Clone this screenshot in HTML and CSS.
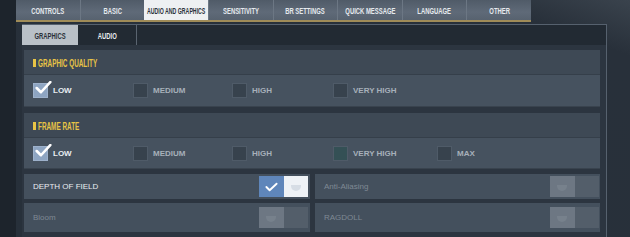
FILE: index.html
```html
<!DOCTYPE html>
<html>
<head>
<meta charset="utf-8">
<link rel="stylesheet" href="styles.css">
</head>
<body>
<div class="page">
  <div class="side"></div>
  <div class="main">
    <div class="tabs">
      <div class="tab"><span class="sx">CONTROLS</span></div>
      <div class="tab"><span class="sx">BASIC</span></div>
      <div class="tab active"><span class="sx">AUDIO AND GRAPHICS</span></div>
      <div class="tab"><span class="sx">SENSITIVITY</span></div>
      <div class="tab"><span class="sx">BR SETTINGS</span></div>
      <div class="tab"><span class="sx">QUICK MESSAGE</span></div>
      <div class="tab"><span class="sx">LANGUAGE</span></div>
      <div class="tab"><span class="sx">OTHER</span></div>
    </div>
    <div class="goldline"></div>
    <div class="frame">
      <div class="subtabs">
        <div class="subtab active"><span class="sx">GRAPHICS</span></div>
        <div class="subtab"><span class="sx">AUDIO</span></div>
      </div>
      <div class="content">
        <div class="section">
          <div class="sec-head"><span class="bar"></span><span class="hx">GRAPHIC QUALITY</span></div>
          <div class="options">
            <div class="opt on"><span class="cb"><svg viewBox="0 0 20 16" class="tick"><path d="M2 8 L7 13 L18 1"/></svg></span>LOW</div>
            <div class="opt"><span class="cb"></span>MEDIUM</div>
            <div class="opt"><span class="cb"></span>HIGH</div>
            <div class="opt"><span class="cb"></span>VERY HIGH</div>
          </div>
        </div>
        <div class="section">
          <div class="sec-head"><span class="bar"></span><span class="hx">FRAME RATE</span></div>
          <div class="options">
            <div class="opt on"><span class="cb"><svg viewBox="0 0 20 16" class="tick"><path d="M2 8 L7 13 L18 1"/></svg></span>LOW</div>
            <div class="opt"><span class="cb"></span>MEDIUM</div>
            <div class="opt"><span class="cb"></span>HIGH</div>
            <div class="opt vh"><span class="cb"></span>VERY HIGH</div>
            <div class="opt"><span class="cb"></span>MAX</div>
          </div>
        </div>
        <div class="toggles">
          <div class="trow r1">
            <span class="tlabel bright">DEPTH OF FIELD</span>
            <span class="toggle on"><span class="half left"><svg viewBox="0 0 14 10" class="tmark"><path d="M1.5 5 L5 8.5 L12.5 1.5"/></svg></span><span class="half right"><span class="dot"></span></span></span>
          </div>
          <div class="trow r1">
            <span class="tlabel">Anti-Aliasing</span>
            <span class="toggle off"><span class="half left"><span class="dot dim"></span></span><span class="half right"></span></span>
          </div>
          <div class="trow r2">
            <span class="tlabel">Bloom</span>
            <span class="toggle off"><span class="half left"><span class="dot dim"></span></span><span class="half right"></span></span>
          </div>
          <div class="trow r2">
            <span class="tlabel">RAGDOLL</span>
            <span class="toggle off"><span class="half left"><span class="dot dim"></span></span><span class="half right"></span></span>
          </div>
        </div>
      </div>
    </div>
  </div>
</div>
</body>
</html>
```

FILE: styles.css
```css
html, body {
  margin: 0;
  padding: 0;
}
body {
  width: 630px;
  height: 237px;
  overflow: hidden;
  background: #28303a;
  font-family: "Liberation Sans", Arial, sans-serif;
}
.page {
  display: flex;
  height: 237px;
  background: linear-gradient(200deg, #3a434d 0%, #28303a 12%, #27303a 100%);
}
.side {
  width: 16px;
  flex: none;
  background: #1d242c;
}
.main {
  flex: 1;
  display: flex;
  flex-direction: column;
}
.tabs {
  display: flex;
  width: 515px;
  height: 20px;
}
.tab {
  flex: 1;
  min-width: 0;
  display: flex;
  align-items: center;
  justify-content: center;
  background: linear-gradient(#505b68, #5f6a78 60%, #57626f);
  border-left: 1px solid #6c7784;
  color: #e6eaee;
  font-weight: bold;
  font-size: 9.5px;
  white-space: nowrap;
  overflow: visible;
}
.sx {
  display: inline-block;
  transform: scaleX(0.62);
  transform-origin: center;
}
.tab:first-child { border-left: none; }
.tab.active {
  background: #eef0f2;
  color: #2c333b;
  border-left: none;
}
.tab.active .sx { transform: scaleX(0.55); }
.goldline {
  width: 515px;
  height: 2px;
  background: #a08c58;
}
.frame {
  margin-top: 2px;
  margin-left: 6px;
  width: 584px;
  flex: 1;
  border-top: 1px solid #56616e;
  border-right: 1px solid #56616e;
  background: #2c3540;
  display: flex;
  flex-direction: column;
}
.subtabs {
  display: flex;
  height: 20px;
  background: #222a33;
}
.subtab {
  display: flex;
  align-items: center;
  justify-content: center;
  color: #e8ecef;
  font-weight: bold;
  font-size: 9.5px;
  width: 58px;
  border-right: 1px solid #5a6470;
}
.subtab.active {
  width: 56px;
  background: #b9c0c7;
  color: #2a3038;
  border-right: none;
}
.content {
  padding: 5px 6px 0 2px;
  display: flex;
  flex-direction: column;
  gap: 6px;
}
.section {
  background: #424d5a;
  display: flex;
  flex-direction: column;
}
.sec-head {
  height: 25px;
  display: flex;
  align-items: center;
  padding-left: 9px;
  padding-top: 2px;
  box-sizing: border-box;
  border-bottom: 1px solid #353f4a;
  color: #e8c446;
  font-weight: bold;
  font-size: 11px;
  background: #3e4955;
  white-space: nowrap;
}
.hx {
  display: inline-block;
  transform: scaleX(0.58);
  transform-origin: left center;
}
.bar {
  width: 3px;
  height: 8px;
  background: #e8c446;
  margin-right: 2px;
}
.options {
  height: 30px;
  display: grid;
  grid-template-columns: 100px 99px 101px 104px auto;
  align-items: center;
  padding-left: 9px;
  background: #46525f;
  border-bottom: 1px solid #39434e;
}
.section:first-child .options { height: 31px; }
.opt {
  display: flex;
  align-items: center;
  color: #a7b0ba;
  font-size: 8px;
  font-weight: bold;
}
.opt.on { color: #e9edf1; }
.cb {
  position: relative;
  width: 13px;
  height: 13px;
  margin-right: 5px;
  background: #37424d;
  border: 1px solid #4f5b68;
  flex: none;
}
.opt.on .cb {
  background: #8ea5c2;
  border-color: #9db1cb;
}
.opt.vh .cb { background: #345055; }
.tick {
  position: absolute;
  left: 1px;
  top: -3px;
  width: 17px;
  height: 14px;
  fill: none;
  stroke: #ffffff;
  stroke-width: 3;
  stroke-linecap: round;
  stroke-linejoin: round;
}
.toggles {
  margin-top: -1px;
  display: grid;
  grid-template-columns: 286px 285px;
  column-gap: 5px;
  row-gap: 4px;
}
.trow {
  display: flex;
  align-items: center;
  justify-content: space-between;
  background: #44505d;
  padding-left: 9px;
  padding-right: 2px;
}
.trow.r1 { height: 25px; }
.trow.r2 { height: 29px; }
.trow:nth-child(2n) { padding-right: 1px; }
.tlabel {
  font-size: 8px;
  color: #7f8994;
}
.tlabel.bright { color: #e8ecf0; }
.toggle {
  display: flex;
  width: 49px;
  height: 21px;
}
.half {
  flex: 1;
  display: flex;
  align-items: center;
  justify-content: center;
}
.toggle.on .left { background: #5f86ba; }
.toggle.on .right { background: #eef2f6; }
.toggle.off .left { background: #6d7783; }
.toggle.off .right { background: #535e6a; }
.tmark {
  width: 13px;
  height: 10px;
  fill: none;
  stroke: #ffffff;
  stroke-width: 2;
  stroke-linecap: round;
  stroke-linejoin: round;
}
.dot {
  width: 10px;
  height: 6px;
  border-radius: 0 0 6px 6px;
  background: #d6dde5;
  margin-top: 3px;
}
.dot.dim { background: #77818c; }
```
